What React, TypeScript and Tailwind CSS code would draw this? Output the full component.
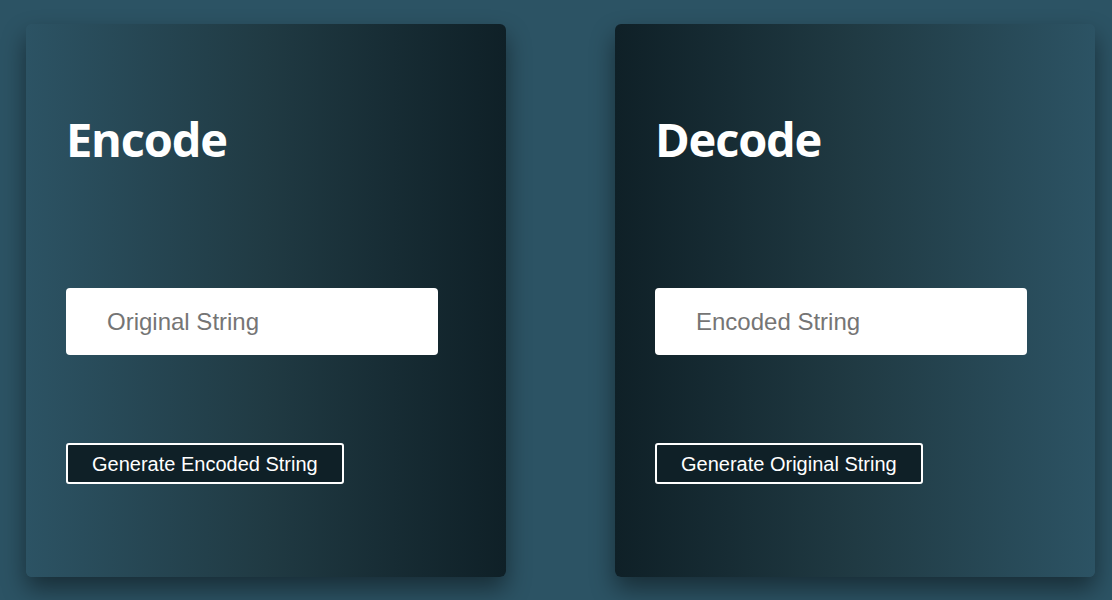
export default function App() {
  return (
    <div className="min-h-[600px] w-full overflow-hidden bg-[#2c5364] pl-[26px] pt-[24px]">
      <div className="flex gap-[109px]">
        <Card title="Encode" placeholder="Original String" action="Generate Encoded String" reverse={false} />
        <Card title="Decode" placeholder="Encoded String" action="Generate Original String" reverse />
      </div>
    </div>
  );
}

function Card({
  title,
  placeholder,
  action,
  reverse,
}: {
  title: string;
  placeholder: string;
  action: string;
  reverse: boolean;
}) {
  return (
    <div
      className={
        "flex h-[553px] w-[480px] flex-col rounded-[6px] px-[40px] pt-[87px] shadow-[0_12px_24px_rgba(0,0,0,0.45)] " +
        (reverse
          ? "bg-gradient-to-r from-[#0f2027] via-[#203a43] to-[#2c5364]"
          : "bg-gradient-to-r from-[#2c5364] via-[#203a43] to-[#0f2027]")
      }
    >
      <h1 className="font-['Open_Sans',sans-serif] text-[47px] leading-[56px] font-bold tracking-[-1.2px] text-white">
        {title}
      </h1>
      <input
        type="text"
        placeholder={placeholder}
        className="mt-[121px] h-[67px] w-[372px] rounded-[4px] bg-white pl-[41px] font-['Liberation_Sans',Arial,sans-serif] text-[24px] text-black outline-none placeholder:text-[#757575]"
      />
      <div className="mt-[88px]">
        <button
          type="button"
          className="h-[41px] rounded-[3px] border-2 border-white bg-[#0f2027] px-[24px] font-['Liberation_Sans',Arial,sans-serif] text-[20px] text-white"
        >
          {action}
        </button>
      </div>
    </div>
  );
}
